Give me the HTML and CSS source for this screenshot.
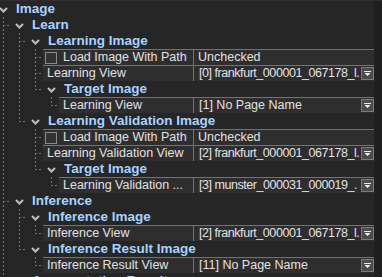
FILE: index.html
```html
<!DOCTYPE html>
<html>
<head>
<meta charset="utf-8">
<link rel="stylesheet" href="styles.css">
</head>
<body>
<div class="panel">
  <div class="tree">
    <div class="row hdr"><span class="chev"><svg width="9" height="6" viewBox="0 0 9 6"><polyline points="1,1 4.5,4.5 8,1"/></svg></span><span class="label">Image</span></div>
    <div class="row hdr"><span class="g t"></span><span class="chev"><svg width="9" height="6" viewBox="0 0 9 6"><polyline points="1,1 4.5,4.5 8,1"/></svg></span><span class="label">Learn</span></div>
    <div class="row hdr"><span class="g v"></span><span class="g t"></span><span class="chev"><svg width="9" height="6" viewBox="0 0 9 6"><polyline points="1,1 4.5,4.5 8,1"/></svg></span><span class="label">Learning Image</span></div>
    <div class="row"><span class="g v"></span><span class="g v"></span><span class="c t"></span>
      <div class="prop"><div class="name"><span class="cb"></span><span class="cbl">Load Image With Path</span></div><div class="val"><span class="txt">Unchecked</span></div></div></div>
    <div class="row"><span class="g v"></span><span class="g v"></span><span class="c t"></span>
      <div class="prop"><div class="name"><span class="txt">Learning View</span></div><div class="val dd"><span class="ddt file">[0] frankfurt_000001_067178_l.</span><span class="btn"><svg width="7" height="5" viewBox="0 0 7 5"><rect x="0" y="0" width="7" height="1"/><polygon points="0.5,2 6.5,2 3.5,5"/></svg></span></div></div></div>
    <div class="row hdr"><span class="g v"></span><span class="g v"></span><span class="g l"></span><span class="chev"><svg width="9" height="6" viewBox="0 0 9 6"><polyline points="1,1 4.5,4.5 8,1"/></svg></span><span class="label">Target Image</span></div>
    <div class="row"><span class="g v"></span><span class="g v"></span><span class="g"></span><span class="c l"></span>
      <div class="prop"><div class="name"><span class="txt">Learning View</span></div><div class="val dd"><span class="ddt">[1] No Page Name</span><span class="btn"><svg width="7" height="5" viewBox="0 0 7 5"><rect x="0" y="0" width="7" height="1"/><polygon points="0.5,2 6.5,2 3.5,5"/></svg></span></div></div></div>
    <div class="row hdr"><span class="g v"></span><span class="g l"></span><span class="chev"><svg width="9" height="6" viewBox="0 0 9 6"><polyline points="1,1 4.5,4.5 8,1"/></svg></span><span class="label">Learning Validation Image</span></div>
    <div class="row"><span class="g v"></span><span class="g"></span><span class="c t"></span>
      <div class="prop"><div class="name"><span class="cb"></span><span class="cbl">Load Image With Path</span></div><div class="val"><span class="txt">Unchecked</span></div></div></div>
    <div class="row"><span class="g v"></span><span class="g"></span><span class="c t"></span>
      <div class="prop"><div class="name"><span class="txt">Learning Validation View</span></div><div class="val dd"><span class="ddt file">[2] frankfurt_000001_067178_l.</span><span class="btn"><svg width="7" height="5" viewBox="0 0 7 5"><rect x="0" y="0" width="7" height="1"/><polygon points="0.5,2 6.5,2 3.5,5"/></svg></span></div></div></div>
    <div class="row hdr"><span class="g v"></span><span class="g"></span><span class="g l"></span><span class="chev"><svg width="9" height="6" viewBox="0 0 9 6"><polyline points="1,1 4.5,4.5 8,1"/></svg></span><span class="label">Target Image</span></div>
    <div class="row"><span class="g v"></span><span class="g"></span><span class="g"></span><span class="c l"></span>
      <div class="prop"><div class="name"><span class="txt">Learning Validation ...</span></div><div class="val dd"><span class="ddt file">[3] munster_000031_000019_.</span><span class="btn"><svg width="7" height="5" viewBox="0 0 7 5"><rect x="0" y="0" width="7" height="1"/><polygon points="0.5,2 6.5,2 3.5,5"/></svg></span></div></div></div>
    <div class="row hdr"><span class="g t"></span><span class="chev"><svg width="9" height="6" viewBox="0 0 9 6"><polyline points="1,1 4.5,4.5 8,1"/></svg></span><span class="label">Inference</span></div>
    <div class="row hdr"><span class="g v"></span><span class="g t"></span><span class="chev"><svg width="9" height="6" viewBox="0 0 9 6"><polyline points="1,1 4.5,4.5 8,1"/></svg></span><span class="label">Inference Image</span></div>
    <div class="row"><span class="g v"></span><span class="g v"></span><span class="c l"></span>
      <div class="prop"><div class="name"><span class="txt">Inference View</span></div><div class="val dd"><span class="ddt file">[2] frankfurt_000001_067178_l.</span><span class="btn"><svg width="7" height="5" viewBox="0 0 7 5"><rect x="0" y="0" width="7" height="1"/><polygon points="0.5,2 6.5,2 3.5,5"/></svg></span></div></div></div>
    <div class="row hdr"><span class="g v"></span><span class="g l"></span><span class="chev"><svg width="9" height="6" viewBox="0 0 9 6"><polyline points="1,1 4.5,4.5 8,1"/></svg></span><span class="label">Inference Result Image</span></div>
    <div class="row"><span class="g v"></span><span class="g"></span><span class="c l"></span>
      <div class="prop"><div class="name"><span class="txt">Inference Result View</span></div><div class="val dd"><span class="ddt">[11] No Page Name</span><span class="btn"><svg width="7" height="5" viewBox="0 0 7 5"><rect x="0" y="0" width="7" height="1"/><polygon points="0.5,2 6.5,2 3.5,5"/></svg></span></div></div></div>
    <div class="row hdr"><span class="g t"></span><span class="chev"><svg width="9" height="6" viewBox="0 0 9 6"><polyline points="1,1 4.5,4.5 8,1"/></svg></span><span class="label">Augmentation Result</span></div>
  </div>
  <div class="scroll"></div>
</div>
</body>
</html>
```

FILE: styles.css
```css
:root {
  --line: #707070;
  --dv: repeating-linear-gradient(to bottom, var(--line) 0 2px, transparent 2px 4px);
  --dh: repeating-linear-gradient(to right, var(--line) 0 2px, transparent 2px 4px);
}
html, body {
  margin: 0;
  padding: 0;
  background: #262626;
  overflow: hidden;
}
body {
  width: 382px;
  height: 277px;
  font-family: "Liberation Sans", Arial, sans-serif;
  font-size: 12.5px;
  color: #e2e2e2;
}
.panel {
  display: flex;
  height: 277px;
  box-sizing: border-box;
  border-top: 1px solid #2e2e2e;
}
.tree {
  flex: 1;
  min-width: 0;
  display: flex;
  flex-direction: column;
}
.scroll {
  width: 8px;
  flex: none;
  background: #1f1f1f;
}
.row {
  display: flex;
  height: 16px;
  flex: none;
  align-items: stretch;
}
.g {
  width: 16px;
  flex: none;
}
.c {
  width: 11px;
  flex: none;
}
.v {
  background: var(--dv) 3px 0 / 1px 100% no-repeat;
}
.t {
  background: var(--dv) 3px 0 / 1px 100% no-repeat,
              var(--dh) 3px 8px / 6px 1px no-repeat;
}
.l {
  background: var(--dv) 3px 0 / 1px 9px no-repeat,
              var(--dh) 3px 8px / 6px 1px no-repeat;
}
.chev {
  width: 16px;
  flex: none;
  display: flex;
  align-items: center;
}
.chev svg {
  margin-left: -1px;
  margin-top: 2px;
  overflow: visible;
}
.chev polyline {
  fill: none;
  stroke: #bcbcbc;
  stroke-width: 2.2;
}
.label {
  font-weight: bold;
  font-size: 13.5px;
  line-height: 16px;
  color: #a6d3ff;
  white-space: nowrap;
}
.prop {
  flex: 1;
  min-width: 0;
  display: flex;
  background: #2e2e2e;
  border-top: 1px solid #747474;
  box-sizing: border-box;
  line-height: 15px;
}
.name {
  flex: 1;
  min-width: 0;
  display: flex;
  align-items: center;
  border-right: 1px solid #747474;
  overflow: hidden;
  white-space: nowrap;
}
.txt {
  padding-left: 4px;
  white-space: nowrap;
}
.cb {
  width: 12px;
  height: 12px;
  box-sizing: border-box;
  margin-left: 2px;
  border: 1px solid #8a8a8a;
  background: #333333;
  flex: none;
}
.cbl {
  padding-left: 6px;
}
.val {
  width: 180px;
  flex: none;
  display: flex;
  align-items: center;
  overflow: hidden;
  white-space: nowrap;
}
.ddt {
  flex: 1;
  min-width: 0;
  overflow: hidden;
  padding-left: 5px;
  margin-right: 2px;
}
.file {
  letter-spacing: -0.45px;
}
.btn {
  width: 13px;
  height: 13px;
  box-sizing: border-box;
  flex: none;
  background: #4c4c4c;
  border: 1px solid #7a7a7a;
  display: flex;
  align-items: center;
  justify-content: center;
}
.btn svg {
  fill: #f0f0f0;
}
```
